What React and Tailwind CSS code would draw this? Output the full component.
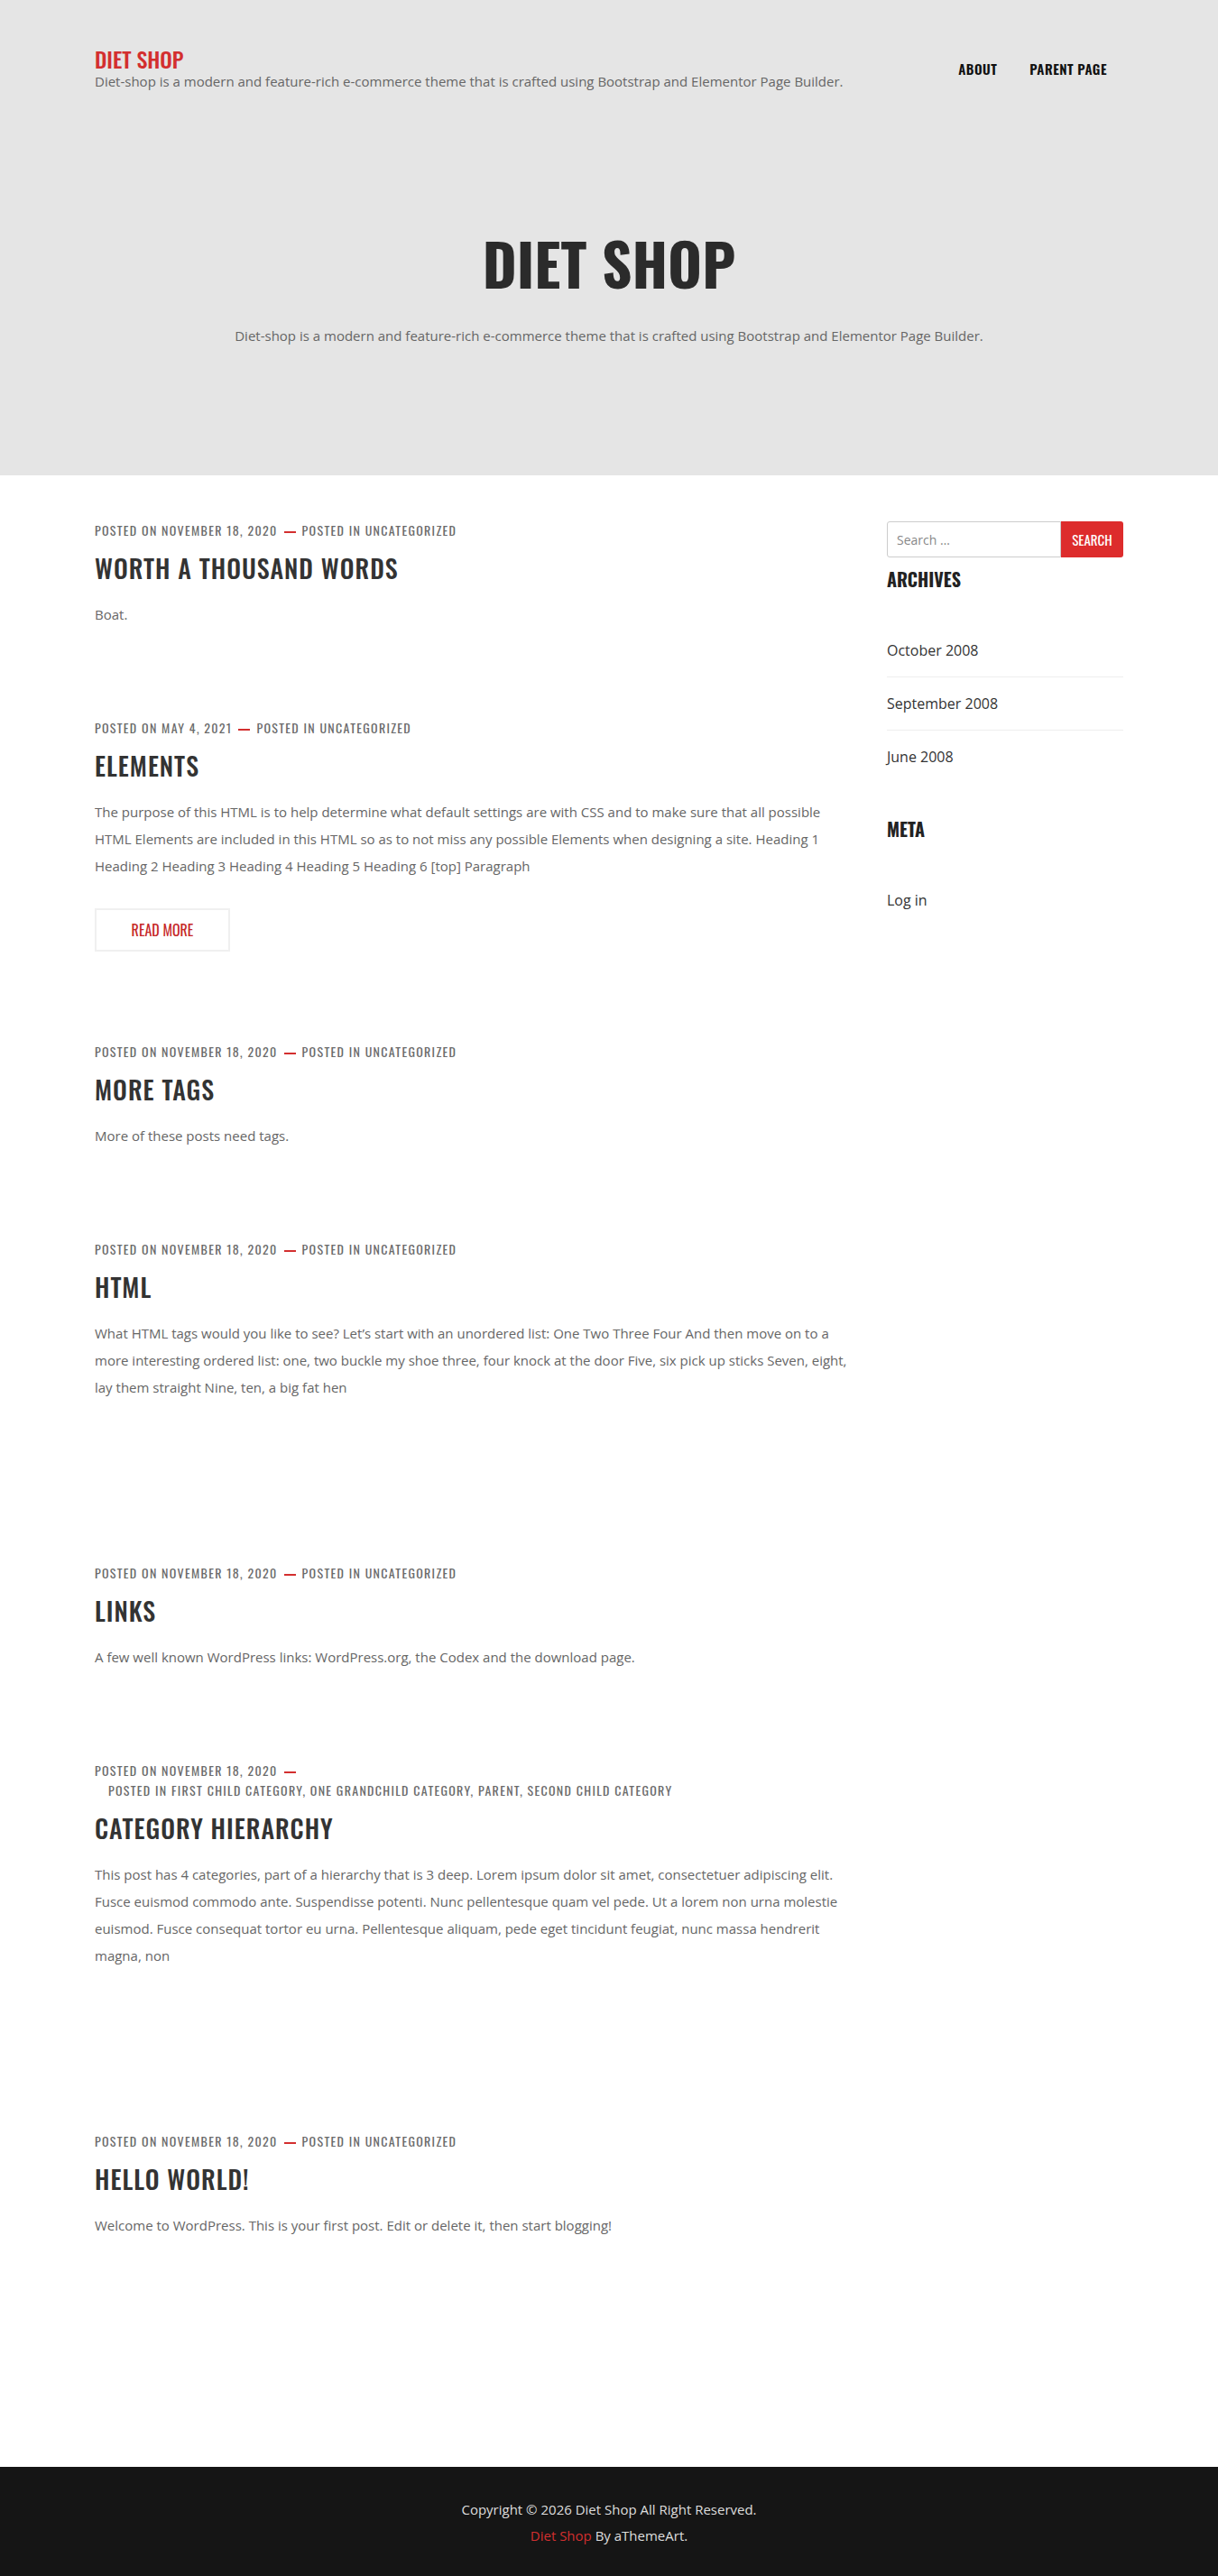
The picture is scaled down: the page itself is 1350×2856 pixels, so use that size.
import React from "react";

const heading = "font-['Oswald','Liberation_Sans_Narrow','DejaVu_Sans_Condensed','Roboto_Condensed',sans-serif]";

const posts = [
  {
    date: "November 18, 2020",
    cats: "Uncategorized",
    title: "Worth a Thousand Words",
    text: "Boat.",
  },
  {
    date: "May 4, 2021",
    cats: "Uncategorized",
    title: "Elements",
    text: "The purpose of this HTML is to help determine what default settings are with CSS and to make sure that all possible HTML Elements are included in this HTML so as to not miss any possible Elements when designing a site. Heading 1 Heading 2 Heading 3 Heading 4 Heading 5 Heading 6 [top] Paragraph",
    more: true,
  },
  {
    date: "November 18, 2020",
    cats: "Uncategorized",
    title: "More Tags",
    text: "More of these posts need tags.",
  },
  {
    date: "November 18, 2020",
    cats: "Uncategorized",
    title: "HTML",
    text: "What HTML tags would you like to see? Let’s start with an unordered list: One Two Three Four And then move on to a more interesting ordered list: one, two buckle my shoe three, four knock at the door Five, six pick up sticks Seven, eight, lay them straight Nine, ten, a big fat hen",
    spacer: true,
  },
  {
    date: "November 18, 2020",
    cats: "Uncategorized",
    title: "Links",
    text: "A few well known WordPress links: WordPress.org, the Codex and the download page.",
  },
  {
    date: "November 18, 2020",
    cats: "First Child Category, One Grandchild Category, Parent, Second Child Category",
    title: "Category Hierarchy",
    text: "This post has 4 categories, part of a hierarchy that is 3 deep. Lorem ipsum dolor sit amet, consectetuer adipiscing elit. Fusce euismod commodo ante. Suspendisse potenti. Nunc pellentesque quam vel pede. Ut a lorem non urna molestie euismod. Fusce consequat tortor eu urna. Pellentesque aliquam, pede eget tincidunt feugiat, nunc massa hendrerit magna, non",
    wrapCats: true,
    spacer: true,
  },
  {
    date: "November 18, 2020",
    cats: "Uncategorized",
    title: "Hello world!",
    text: "Welcome to WordPress. This is your first post. Edit or delete it, then start blogging!",
  },
];

function Dash() {
  return <span className="inline-block w-[13px] h-[2px] bg-[#d32f2f] mx-[7px] align-middle" />;
}

function PostMeta({ post }) {
  const cls = `${heading} text-[14px] leading-[20px] tracking-[1.3px] uppercase text-[#6b6b6b]`;
  if (post.wrapCats) {
    return (
      <div className={cls}>
        <div>
          Posted on <a href="#">{post.date}</a>
          <Dash />
        </div>
        <div className="pl-[15px] mt-[2px]">
          Posted in <a href="#">{post.cats}</a>
        </div>
      </div>
    );
  }
  return (
    <div className={cls}>
      Posted on <a href="#">{post.date}</a>
      <Dash />
      Posted in <a href="#">{post.cats}</a>
    </div>
  );
}

function Post({ post }) {
  return (
    <article className="mb-[101px]">
      <PostMeta post={post} />
      <h2 className={`${heading} mt-[14px] text-[28px] leading-[36px] font-medium tracking-[1px] uppercase text-[#333]`}>
        <a href="#">{post.title}</a>
      </h2>
      <p className="mt-[18px] text-[15px] leading-[30px] text-[#666]">{post.text}</p>
      {post.more && (
        <a
          href="#"
          className={`${heading} mt-[32px] flex items-center justify-center w-[150px] h-[48px] border-2 border-[#f0f0f0] text-[16px] uppercase text-[#c62828]`}
        >
          Read More
        </a>
      )}
      {/* these excerpts keep an empty more-link slot */}
      {post.spacer && <div className="mt-[32px] h-[48px]" />}
    </article>
  );
}

function Widget({ title, items, className }) {
  return (
    <section className={className}>
      <h2 className={`${heading} text-[20px] leading-[28px] font-bold uppercase text-[#222]`}>{title}</h2>
      <ul className="mt-[36px]">
        {items.map((it, i) => (
          <li
            key={it}
            className={`py-[14px] text-[16px] leading-[30px] text-[#333] ${i < items.length - 1 ? "border-b border-[#eee]" : ""}`}
          >
            <a href="#">{it}</a>
          </li>
        ))}
      </ul>
    </section>
  );
}

export default function App() {
  return (
    <div className="min-h-screen bg-white font-['Open_Sans',sans-serif]">
      {/* Header / hero */}
      <header className="h-[527px] bg-[#e5e5e5]">
        <div className="w-[1140px] mx-auto pt-[50px] flex justify-between">
          <div>
            <a href="#" className={`${heading} block text-[24px] leading-[30px] font-medium uppercase text-[#d32f2f]`}>
              Diet Shop
            </a>
            <p className="text-[15px] leading-[20px] text-[#666]">
              Diet-shop is a modern and feature-rich e-commerce theme that is crafted using Bootstrap and Elementor Page Builder.
            </p>
          </div>
          <nav className={`${heading} flex mt-[16px] h-[20px] text-[15px] leading-[20px] font-semibold tracking-[0.5px] uppercase text-[#111]`}>
            <a href="#" className="px-[18px]">About</a>
            <a href="#" className="px-[18px]">Parent Page</a>
          </nav>
        </div>
        <div className="mt-[151px] text-center">
          <h1 className={`${heading} text-[65px] leading-[80px] font-bold uppercase text-[#2b2b2b]`}>Diet Shop</h1>
          <p className="mt-[31px] text-[15px] leading-[20px] text-[#666]">
            Diet-shop is a modern and feature-rich e-commerce theme that is crafted using Bootstrap and Elementor Page Builder.
          </p>
        </div>
      </header>

      {/* Content */}
      <div className="w-[1140px] mx-auto pt-[51px] pb-[152px] flex">
        <main className="w-[847px]">
          {posts.map((p) => (
            <Post key={p.title} post={p} />
          ))}
        </main>

        <aside className="w-[262px] ml-auto">
          <form className="flex h-[40px]" onSubmit={(e) => e.preventDefault()}>
            <input
              type="search"
              placeholder="Search …"
              className="w-[193px] h-full border border-[#ccc] rounded-l-[3px] px-[10px] text-[14px] text-[#333] placeholder:text-[#888] outline-none"
            />
            <button
              type="submit"
              className={`${heading} w-[69px] h-full bg-[#dd2c2c] rounded-r-[3px] text-[15px] uppercase text-white`}
            >
              Search
            </button>
          </form>
          <Widget className="mt-[10px]" title="Archives" items={["October 2008", "September 2008", "June 2008"]} />
          <Widget className="mt-[37px]" title="Meta" items={["Log in"]} />
        </aside>
      </div>

      {/* Footer */}
      <footer className="h-[121px] bg-[#151515] pt-[33px] text-center text-[15px] leading-[29px] text-[#ddd]">
        <p>Copyright © 2026 Diet Shop All Right Reserved.</p>
        <p>
          <a href="#" className="text-[#d32f2f]">Diet Shop</a> By aThemeArt.
        </p>
      </footer>
    </div>
  );
}
